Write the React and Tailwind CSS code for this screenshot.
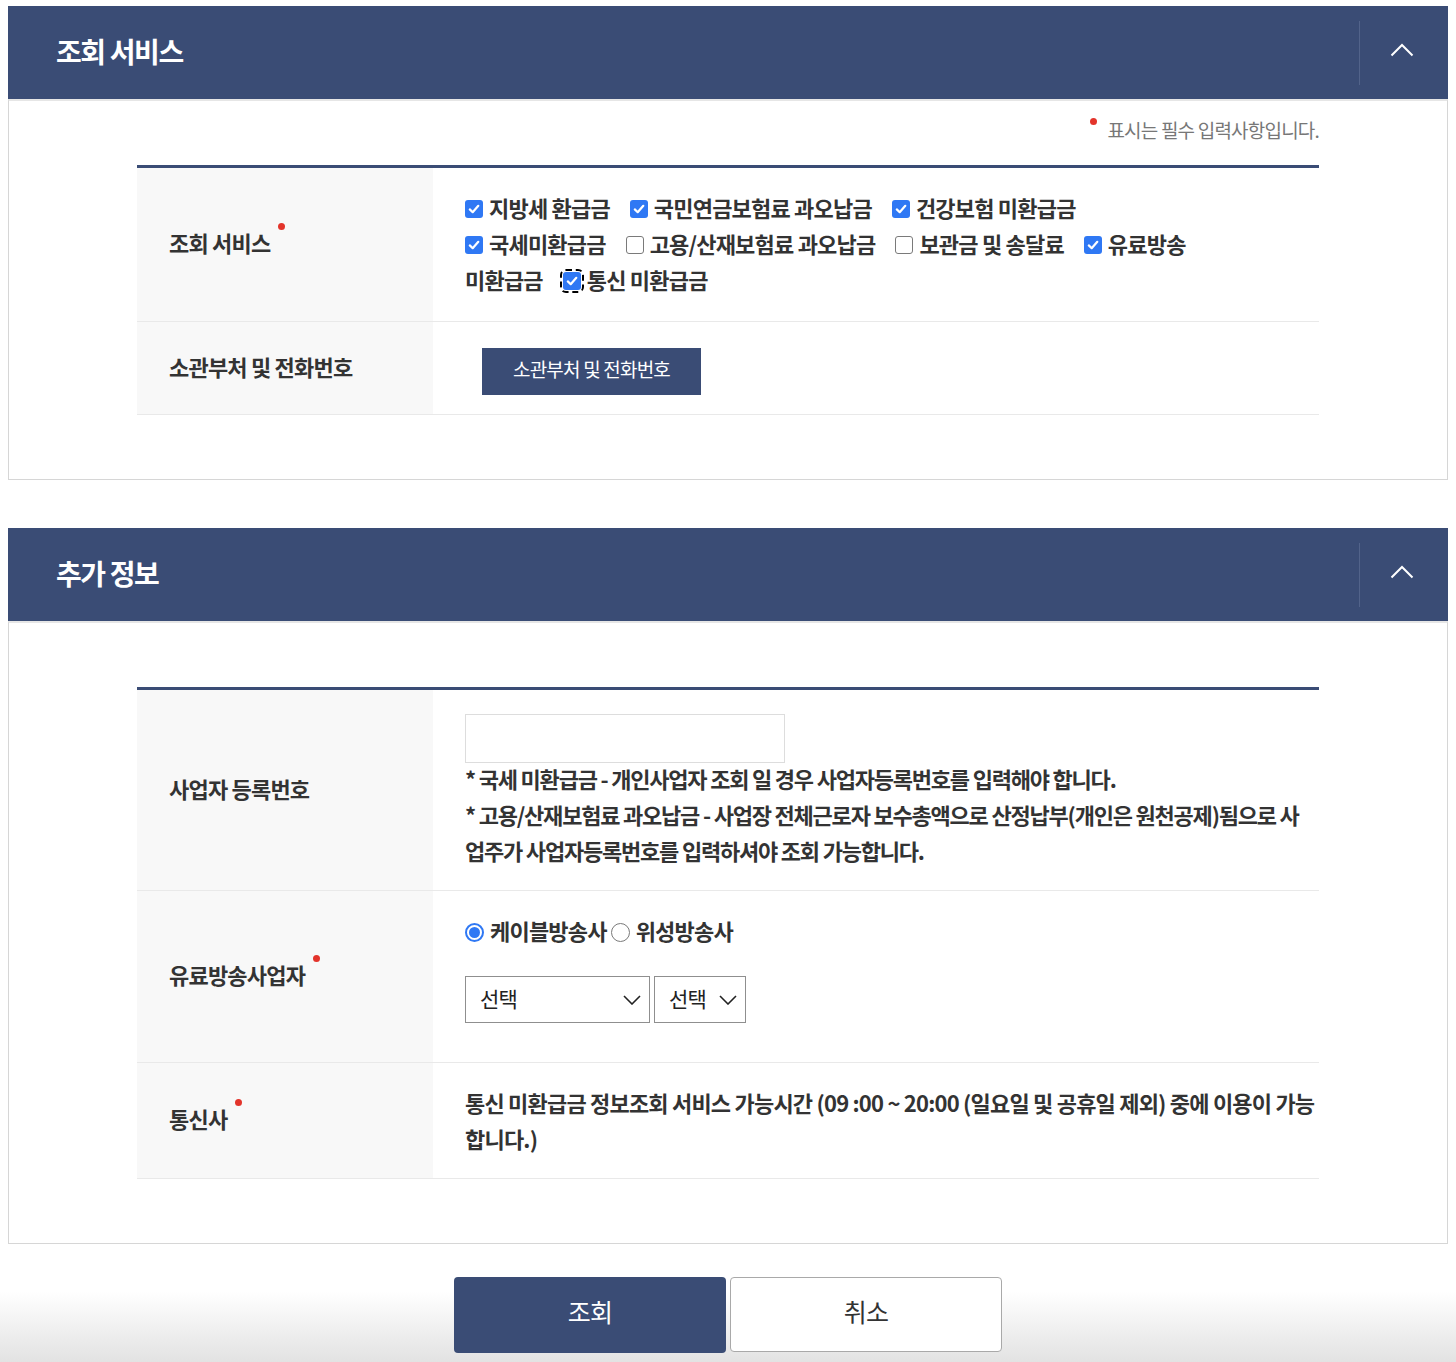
import React from 'react';

const NAVY = 'bg-[#3a4c75]';

function Chevron() {
  return (
    <svg width="24" height="14" viewBox="0 0 24 14" fill="none">
      <path d="M1.5 12.5 L12 2 L22.5 12.5" stroke="#fff" strokeWidth="2" />
    </svg>
  );
}

function Panel({ title, children }) {
  return (
    <section>
      <div className={`h-[93px] ${NAVY} flex items-center justify-between`}>
        <h2 className="pl-[48px] pb-[4px] text-[28px] font-bold text-white tracking-[-0.05em] leading-none">{title}</h2>
        <button className="w-[89px] h-[64px] border-l border-[#52638a] flex items-center justify-center pb-[6px] pr-[5px]">
          <Chevron />
        </button>
      </div>
      <div className="border-x border-b border-[#d6d6d6] border-t-2 border-t-[#e6e6e6]">{children}</div>
    </section>
  );
}

function Dot({ className = '' }) {
  return <span className={`inline-block align-top w-[7px] h-[7px] rounded-full bg-[#e3342b] ${className}`} />;
}

function Row({ label, required, children, className = '' }) {
  return (
    <div className="flex border-b border-[#e9e9e9]">
      <div className="w-[296px] shrink-0 bg-[#f8f8f8] flex items-center pl-[32px] pb-[5px] text-[22px] font-semibold text-[#333]">
        <span className="leading-[36px]">
          {label}
          {required && <Dot className="ml-[8px] -mt-[1px]" />}
        </span>
      </div>
      <div className={`flex-1 pl-[32px] ${className}`}>{children}</div>
    </div>
  );
}

function Check({ checked, focused, children }) {
  return (
    <span className="inline-flex items-center mr-[20px]">
      <span
        className={`w-[18px] h-[18px] rounded-[3px] flex items-center justify-center translate-y-[2px] ${
          checked ? 'bg-[#2f78f4]' : 'bg-white border border-[#7a7a7a]'
        } ${focused ? 'outline-2 outline-dashed outline-black outline-offset-[1px]' : ''}`}
      >
        {checked && (
          <svg width="14" height="14" viewBox="0 0 14 14" fill="none">
            <path d="M2.8 7.4 L5.7 10.2 L11.3 3.8" stroke="#fff" strokeWidth="2.2" strokeLinecap="round" strokeLinejoin="round" />
          </svg>
        )}
      </span>
      <span className="ml-[6px]">{children}</span>
    </span>
  );
}

function Radio({ checked, children }) {
  return (
    <span className="inline-flex items-center mr-[4px]">
      <span
        className={`w-[19px] h-[19px] rounded-full flex items-center justify-center bg-white border translate-y-[2px] ${
          checked ? 'border-[#2f78f4] border-[2px]' : 'border-[#7a7a7a]'
        }`}
      >
        {checked && <span className="w-[11px] h-[11px] rounded-full bg-[#2f78f4]" />}
      </span>
      <span className="ml-[6px]">{children}</span>
    </span>
  );
}

function Select({ width }) {
  return (
    <div className={`${width} h-[47px] border border-[#8f8f8f] bg-white flex items-center justify-between pl-[14px] pr-[8px]`}>
      <span className="text-[21px] font-normal text-[#222] pb-[3px]">선택</span>
      <svg width="18" height="10" viewBox="0 0 18 10" fill="none">
        <path d="M1 1 L9 9 L17 1" stroke="#222" strokeWidth="1.6" />
      </svg>
    </div>
  );
}

export default function App() {
  return (
    <div className="min-h-[1362px] bg-white flex flex-col font-['Noto_Sans_CJK_KR','Noto_Sans',sans-serif] tracking-[-0.05em] text-[#333]">
      <div className="px-[8px] pt-[6px] flex flex-col gap-[48px]">
        <Panel title="조회 서비스">
          <div className="px-[128px] pt-[18px] pb-[64px]">
            <p className="flex justify-end items-start text-[19px] leading-[24px] text-[#777]">
              <Dot className="mt-[-1px] mr-[10px]" />
              <span className="-translate-y-[1px]">표시는 필수 입력사항입니다.</span>
            </p>
            <div className="mt-[22px] border-t-[3px] border-[#3a4c75]">
              <Row label="조회 서비스" required className="pt-[21px] pb-[24px] text-[22px] leading-[36px] font-semibold">
                <div className="flex">
                  <Check checked>지방세 환급금</Check>
                  <Check checked>국민연금보험료 과오납금</Check>
                  <Check checked>건강보험 미환급금</Check>
                </div>
                <div className="flex">
                  <Check checked>국세미환급금</Check>
                  <Check>고용/산재보험료 과오납금</Check>
                  <Check>보관금 및 송달료</Check>
                  <Check checked>유료방송</Check>
                </div>
                <div className="flex">
                  <span className="mr-[20px]">미환급금</span>
                  <Check checked focused>통신 미환급금</Check>
                </div>
              </Row>
              <Row label="소관부처 및 전화번호" className="pt-[26px] pb-[19px]">
                <button className={`ml-[17px] w-[219px] h-[47px] ${NAVY} text-white text-[19px] pb-[4px]`}>
                  소관부처 및 전화번호
                </button>
              </Row>
            </div>
          </div>
        </Panel>

        <Panel title="추가 정보">
          <div className="px-[128px] pt-[64px] pb-[64px]">
            <div className="border-t-[3px] border-[#3a4c75]">
              <Row label="사업자 등록번호" className="pt-[24px] pb-[19px] text-[22px] leading-[36px] font-semibold tracking-[-0.055em]">
                <input className="block w-[320px] h-[49px] border border-[#dddddd] bg-white mb-[-3px]" />
                <div className="whitespace-nowrap">* 국세 미환급금 - 개인사업자 조회 일 경우 사업자등록번호를 입력해야 합니다.</div>
                <div className="whitespace-nowrap">* 고용/산재보험료 과오납금 - 사업장 전체근로자 보수총액으로 산정납부(개인은 원천공제)됨으로 사</div>
                <div className="whitespace-nowrap mb-[3px]">업주가 사업자등록번호를 입력하셔야 조회 가능합니다.</div>
              </Row>
              <Row label="유료방송사업자" required className="pt-[21px] pb-[39px] text-[22px] leading-[36px] font-semibold">
                <div className="flex">
                  <Radio checked>케이블방송사</Radio>
                  <Radio>위성방송사</Radio>
                </div>
                <div className="mt-[28px] flex gap-[4px]">
                  <Select width="w-[185px]" />
                  <Select width="w-[92px]" />
                </div>
              </Row>
              <Row label="통신사" required className="pt-[21px] pb-[22px] text-[22px] leading-[36px] font-semibold">
                <div className="whitespace-nowrap">통신 미환급금 정보조회 서비스 가능시간 (09 :00 ~ 20:00 (일요일 및 공휴일 제외) 중에 이용이 가능</div>
                <div>합니다.)</div>
              </Row>
            </div>
          </div>
        </Panel>
      </div>

      <div className="flex-1 flex justify-center items-start gap-[4px] pt-[33px] pb-[10px] bg-linear-to-b from-white from-40% to-[#e2e2e2]">
        <button className={`w-[272px] h-[76px] rounded-[4px] ${NAVY} text-white text-[25px] pb-[6px]`}>조회</button>
        <button className="w-[272px] h-[75px] rounded-[4px] bg-white border border-[#a9a9a9] text-[#333] text-[25px] pb-[6px]">취소</button>
      </div>
    </div>
  );
}
